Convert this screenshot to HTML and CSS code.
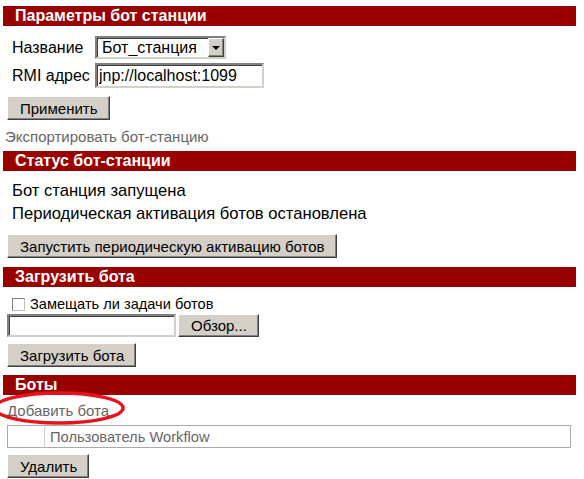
FILE: index.html
```html
<!DOCTYPE html>
<html lang="ru">
<head>
<meta charset="utf-8">
<title>Бот станция</title>
<link rel="stylesheet" href="styles.css">
</head>
<body>
<div class="page">
  <section class="panel">
    <h2 class="bar">Параметры бот станции</h2>
    <div class="form">
      <div class="row">
        <span class="label">Название</span>
        <span class="select">
          <select class="select-el"><option>Бот_станция</option></select>
          <span class="select-arrow"></span>
        </span>
      </div>
      <div class="row row-rmi">
        <span class="label">RMI адрес</span>
        <input class="text rmi" type="text" value="jnp://localhost:1099">
      </div>
    </div>
    <div class="actions"><button class="btn">Применить</button></div>
  </section>
  <a class="link export">Экспортировать бот-станцию</a>

  <section class="panel">
    <h2 class="bar">Статус бот-станции</h2>
    <div class="status">
      <p class="line">Бот станция запущена</p>
      <p class="line">Периодическая активация ботов остановлена</p>
    </div>
    <div class="actions"><button class="btn">Запустить периодическую активацию ботов</button></div>
  </section>

  <section class="panel">
    <h2 class="bar">Загрузить бота</h2>
    <label class="check"><span class="box"></span>Замещать ли задачи ботов</label>
    <div class="file">
      <input class="text filepath" type="text">
      <button class="btn browse">Обзор...</button>
    </div>
    <div class="actions"><button class="btn">Загрузить бота</button></div>
  </section>

  <section class="panel">
    <h2 class="bar">Боты</h2>
    <div class="add-wrap">
      <a class="link add">Добавить бота</a>
      <svg class="ellipse" width="130" height="40" viewBox="0 0 130 40">
        <ellipse cx="59" cy="17" rx="64" ry="15" fill="none" stroke="#e8121c" stroke-width="3.5"/>
      </svg>
    </div>
    <table class="bots">
      <tr><td class="sel"></td><td class="name">Пользователь Workflow</td></tr>
    </table>
    <div class="actions"><button class="btn">Удалить</button></div>
  </section>
</div>
</body>
</html>
```
FILE: styles.css
```css
html, body {
  margin: 0;
  padding: 0;
  background: #fff;
}
body {
  font-family: "Liberation Sans", Arial, sans-serif;
  font-size: 16px;
  color: #000;
}
.page {
  width: 573px;
  padding: 6px 0 0 3px;
}
.bar {
  margin: 0;
  height: 20px;
  line-height: 20px;
  background: #990000;
  color: #fff;
  font-size: 16px;
  font-weight: bold;
  padding-left: 12px;
}
.form {
  padding: 10px 0 0 9px;
}
.row {
  display: flex;
  align-items: center;
  height: 23px;
}
.row-rmi {
  margin-top: 4px;
  height: 25px;
}
.label {
  width: 83px;
  line-height: 20px;
}
.select {
  position: relative;
  display: inline-block;
  width: 131px;
  height: 23px;
  box-sizing: border-box;
  border: 2px solid;
  border-color: #808080 #d4d0c8 #d4d0c8 #808080;
  box-shadow: inset 1px 1px #404040;
  background: #fff;
}
.select-el {
  appearance: none;
  -webkit-appearance: none;
  border: 0;
  outline: 0;
  background: transparent;
  font: 16px "Liberation Sans", Arial, sans-serif;
  color: #000;
  width: 100%;
  height: 19px;
  padding: 0 0 0 5px;
  margin: 0;
}
.select-arrow {
  position: absolute;
  top: 0;
  bottom: 0;
  right: 0;
  width: 16px;
  box-sizing: border-box;
  background: #d4d0c8;
  border: 1px solid;
  border-color: #fff #404040 #404040 #fff;
  box-shadow: inset -1px -1px #808080;
  pointer-events: none;
}
.select-arrow::after {
  content: "";
  position: absolute;
  left: 3px;
  top: 7px;
  border-left: 4px solid transparent;
  border-right: 4px solid transparent;
  border-top: 4px solid #000;
}
.text {
  box-sizing: border-box;
  height: 25px;
  border: 2px solid;
  border-color: #808080 #d4d0c8 #d4d0c8 #808080;
  box-shadow: inset 1px 1px #404040;
  font: 16px "Liberation Sans", Arial, sans-serif;
  color: #000;
  padding: 0 2px;
  margin: 0;
  background: #fff;
  outline: 0;
}
.rmi { width: 169px; }
.actions {
  padding-left: 4px;
}
.btn {
  box-sizing: border-box;
  height: 24px;
  padding: 0 11px 0 12px;
  margin: 0;
  background: #d4d0c8;
  border: 1px solid;
  border-color: #fff #404040 #404040 #fff;
  box-shadow: inset -1px -1px #808080;
  font: 15px "Liberation Sans", Arial, sans-serif;
  color: #000;
}
.form + .actions { margin-top: 8px; }
.link {
  display: block;
  color: #666;
  font-size: 15px;
  line-height: 20px;
}
.export {
  margin: 7px 0 4px 2px;
}
.status {
  padding: 8px 0 0 9px;
  font-size: 16.6px;
}
.line {
  margin: 0;
  line-height: 23px;
}
.status + .actions { margin-top: 9px; margin-bottom: 9px; }
.check {
  display: flex;
  align-items: center;
  margin: 8px 0 0 9px;
  font-size: 14.6px;
  line-height: 18px;
}
.box {
  width: 13px;
  height: 13px;
  box-sizing: border-box;
  border: 1px solid;
  border-color: #808080 #c0c0c0 #c0c0c0 #808080;
  margin-right: 5px;
}
.file {
  display: flex;
  gap: 2px;
  margin: 1px 0 0 4px;
}
.filepath { width: 169px; height: 23px; }
.browse { height: 23px; }
.file + .actions { margin-top: 6px; margin-bottom: 8px; }
.add-wrap {
  position: relative;
  height: 30px;
}
.add {
  padding: 6px 0 0 4px;
}
.ellipse {
  position: absolute;
  left: -3px;
  top: -4px;
}
.bots {
  border-collapse: collapse;
  margin-left: 4px;
  width: 564px;
  border: 1px solid #aaa;
}
.bots td {
  height: 21px;
  padding: 0;
  font-size: 14.7px;
  color: #666;
}
.bots .sel {
  width: 36px;
  border-right: 1px solid #ccc;
}
.bots .name {
  padding-left: 5px;
}
.bots + .actions { margin-top: 6px; }
```
